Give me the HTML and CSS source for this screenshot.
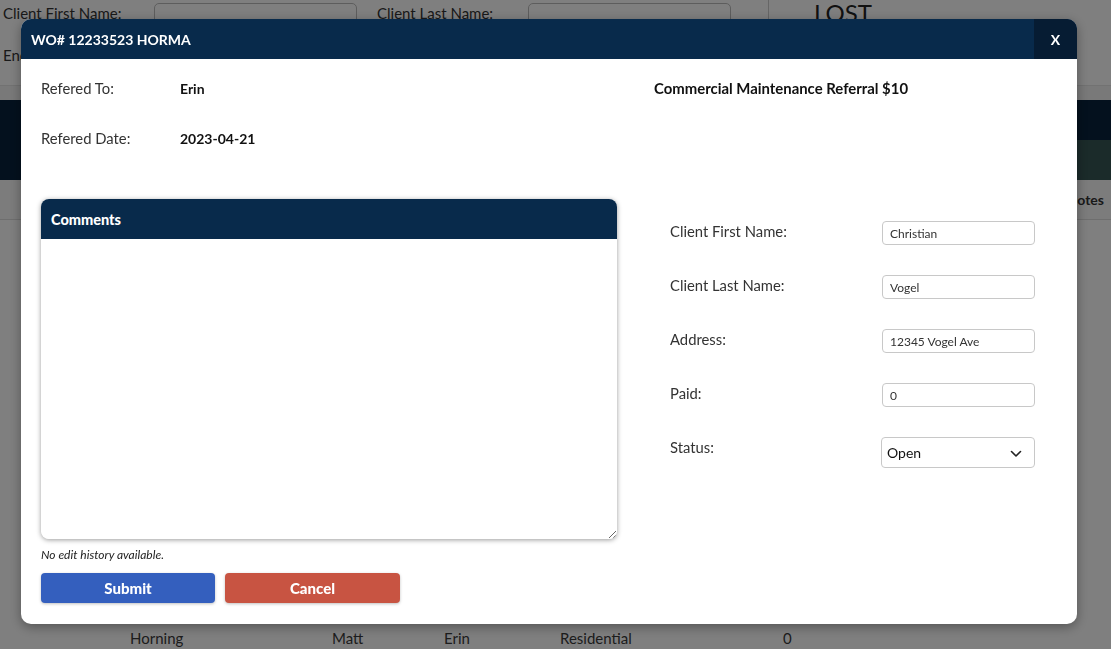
FILE: index.html
```html
<!DOCTYPE html>
<html>
<head>
<meta charset="utf-8">
<link rel="stylesheet" href="styles.css">
</head>
<body>
<div class="page">
  <div class="topform">
    <div class="tf-fields">
      <div class="tf-row">
        <span class="tf-label">Client First Name:</span>
        <span class="tf-input"></span>
        <span class="tf-label tf-label2">Client Last Name:</span>
        <span class="tf-input"></span>
      </div>
      <div class="tf-row tf-row2">
        <span class="tf-label">End Date:</span>
      </div>
    </div>
    <div class="tf-status">LOST</div>
  </div>
  <div class="subbar"></div>
  <div class="navband"></div>
  <div class="tabband"><div class="tab-green"></div></div>
  <div class="thead"><span class="th-notes">Notes</span></div>
  <div class="tbody">
    <div class="trow"></div><div class="trow"></div><div class="trow"></div>
    <div class="trow"></div><div class="trow"></div><div class="trow"></div>
    <div class="trow"></div><div class="trow"></div><div class="trow"></div>
    <div class="trow">
      <span class="c1">Horning</span><span class="c2">Matt</span><span class="c3">Erin</span><span class="c4">Residential</span><span class="c5">0</span>
    </div>
  </div>
</div>

<div class="overlay"></div>

<div class="modal">
  <div class="modal-head">
    <div class="modal-title">WO# 12233523 HORMA</div>
    <div class="modal-close">X</div>
  </div>
  <div class="modal-body">
    <div class="info">
      <div class="info-left">
        <div class="info-row"><span class="info-label">Refered To:</span><span class="info-value">Erin</span></div>
        <div class="info-row"><span class="info-label">Refered Date:</span><span class="info-value">2023-04-21</span></div>
      </div>
      <div class="info-type">Commercial Maintenance Referral $10</div>
    </div>
    <div class="main">
      <div class="left-col">
        <div class="card">
          <div class="card-head">Comments</div>
          <textarea class="card-text"></textarea>
        </div>
        <div class="history">No edit history available.</div>
        <div class="actions">
          <button class="btn btn-submit">Submit</button>
          <button class="btn btn-cancel">Cancel</button>
        </div>
      </div>
      <div class="form">
        <div class="f-row"><span class="f-label">Client First Name:</span><input class="f-input" value="Christian"></div>
        <div class="f-row"><span class="f-label">Client Last Name:</span><input class="f-input" value="Vogel"></div>
        <div class="f-row"><span class="f-label">Address:</span><input class="f-input" value="12345 Vogel Ave"></div>
        <div class="f-row"><span class="f-label">Paid:</span><input class="f-input" value="0"></div>
        <div class="f-row"><span class="f-label">Status:</span>
          <div class="f-select"><span>Open</span>
            <svg width="12" height="8" viewBox="0 0 12 8"><path d="M1.5 1.5 L6 6 L10.5 1.5" fill="none" stroke="#222" stroke-width="1.6" stroke-linecap="round" stroke-linejoin="round"/></svg>
          </div>
        </div>
      </div>
    </div>
  </div>
</div>
</body>
</html>
```

FILE: styles.css
```css
* { box-sizing: border-box; }
html, body { margin: 0; padding: 0; }
body {
  font-family: Lato, "Open Sans", sans-serif;
  color: #333;
  background: #fff;
  width: 1111px;
  height: 649px;
  overflow: hidden;
}
.page { width: 1111px; }

.topform {
  height: 85px;
  display: flex;
  background: #fff;
}
.tf-fields { width: 769px; border-right: 1px solid #ccc; padding-left: 3px; }
.tf-row { display: flex; align-items: flex-start; height: 38px; }
.tf-row2 { height: 47px; padding-top: 4px; }
.tf-label { font-size: 15px; line-height: 26px; color: #333; width: 151px; }
.tf-label2 { width: 151px; margin-left: 20px; }
.tf-input {
  width: 203px; height: 30px; margin-top: 3px;
  border: 1px solid #bbb; border-radius: 5px; background: #fff;
}
.tf-status { font-size: 24px; line-height: 24px; padding-left: 45px; padding-top: 1px; color: #222; }

.subbar { height: 15px; background: #f3f3f3; border-top: 1px solid #e4e4e4; }
.navband { height: 40px; background: #08223c; }
.tabband { height: 40px; background: #08223c; display: flex; justify-content: flex-end; }
.tab-green { width: 200px; background: #365654; }
.thead {
  height: 40px; background: #f9f9f9; border-bottom: 1px solid #ddd;
  display: flex; align-items: center; justify-content: flex-end;
}
.th-notes { font-weight: 700; font-size: 14px; color: #333; margin-right: 7px; }
.trow {
  height: 44px; display: flex; align-items: center;
  padding-left: 130px; font-size: 15px; color: #3a3a3a;
}
.c1 { width: 202px; }
.c2 { width: 112px; }
.c3 { width: 116px; }
.c4 { width: 223px; }

.overlay { position: fixed; inset: 0; background: rgba(0, 0, 0, 0.5); }

.modal {
  position: fixed; left: 21px; top: 19px; width: 1056px; height: 605px;
  background: #fff; border-radius: 10px;
  box-shadow: 0 3px 12px rgba(0, 0, 0, 0.35);
  display: flex; flex-direction: column;
}
.modal-head {
  height: 40px; background: #082a4b; border-radius: 10px 10px 0 0;
  display: flex; align-items: stretch; justify-content: space-between;
}
.modal-title {
  color: #fff; font-weight: 700; font-size: 14px;
  display: flex; align-items: center; padding-left: 10px;
}
.modal-close {
  width: 43px; background: #061c33; color: #fff; font-weight: 700; font-size: 14px;
  display: flex; align-items: center; justify-content: center;
  border-radius: 0 10px 0 0;
}
.modal-body { padding: 19px 20px 0 20px; }

.info { display: flex; height: 121px; }
.info-left { width: 613px; display: flex; flex-direction: column; gap: 30px; }
.info-row { display: flex; height: 20px; align-items: center; }
.info-label { width: 139px; color: #333; font-size: 14.8px; }
.info-value { font-weight: 700; color: #111; font-size: 14px; }
.info-type { font-weight: 700; font-size: 14.9px; color: #111; line-height: 20px; }

.main { display: flex; }
.left-col { width: 576px; }
.card {
  border-radius: 8px; overflow: hidden;
  box-shadow: 0 1px 5px rgba(0, 0, 0, 0.4);
  display: flex; flex-direction: column;
}
.card-head {
  height: 40px; background: #082a4b; color: #fff;
  font-weight: 900; font-size: 14.5px;
  display: flex; align-items: center; padding-left: 10px;
}
.card-text {
  height: 300px; border: none; resize: vertical; display: block; width: 100%;
  font-family: inherit; outline: none; border-radius: 0 0 8px 8px;
}
.history { font-style: italic; font-size: 12px; color: #222; margin-top: 9px; line-height: 14px; }
.actions { display: flex; gap: 10px; margin-top: 11px; }
.btn {
  height: 30px; border: none; border-radius: 4px; color: #fff;
  font-family: inherit; font-weight: 900; font-size: 15px;
  box-shadow: 0 1px 3px rgba(0, 0, 0, 0.25);
}
.btn-submit { width: 174px; background: #345fbe; }
.btn-cancel { width: 175px; background: #c85442; }

.form { margin-left: 53px; padding-top: 22px; display: flex; flex-direction: column; gap: 30px; width: 365px; }
.f-row { display: flex; height: 24px; align-items: flex-start; }
.f-label { width: 212px; font-size: 14.8px; line-height: 20px; color: #333; }
.f-input {
  width: 153px; height: 24px; border: 1px solid #c8c8c8; border-radius: 4px;
  padding: 0 0 0 7px; font-family: inherit; font-size: 12px; color: #333;
  outline: none;
}
.f-select {
  width: 154px; height: 31px; margin-left: -1px;
  border: 1px solid #c8c8c8; border-radius: 4px;
  display: flex; align-items: center; justify-content: space-between;
  padding: 0 12px 0 5px; font-size: 14px; color: #111;
}
.f-select svg { margin-top: 2px; }
```
